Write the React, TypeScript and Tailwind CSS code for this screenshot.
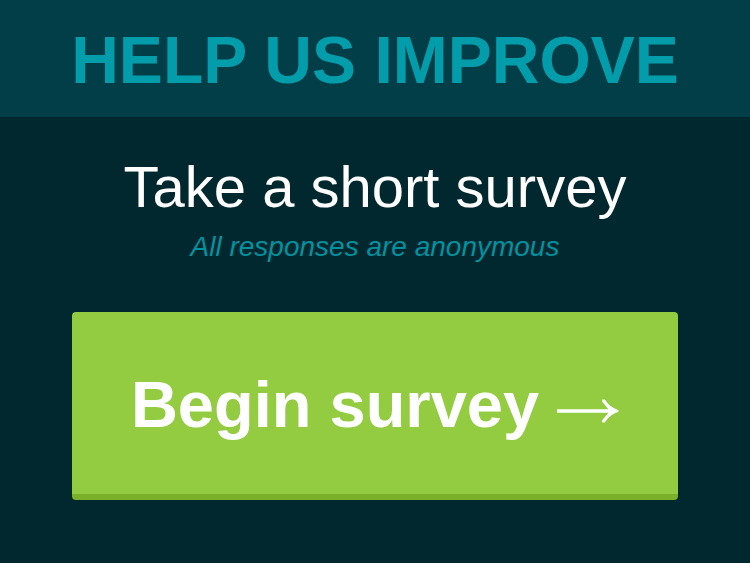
export default function App() {
  return (
    <main className="min-h-screen bg-[#01282e] font-['Liberation_Sans',Arial,sans-serif]">
      <header className="bg-[#023e48] px-4 pt-6 pb-5 text-center">
        <h1 className="text-[66px] leading-[73px] font-bold whitespace-nowrap text-[#039caa]">
          HELP US IMPROVE
        </h1>
      </header>
      <section className="px-18 pt-9 text-center">
        <h2 className="text-[58px] leading-[68px] text-white">
          Take a short survey
        </h2>
        <p className="mt-2 text-[28px] leading-[35px] text-[#0391a0] italic">
          All responses are anonymous
        </p>
        <button
          type="button"
          className="mt-12 flex w-full items-center justify-center gap-[18px] rounded-[4px] border-b-[6px] border-[#7bb02a] bg-[#93cc40] pt-[54px] pb-[51px] text-[65px] leading-[77px] font-bold text-white"
        >
          Begin survey
          <svg viewBox="0 0 62 24" className="mt-3 w-[62px]" aria-hidden="true">
            <path
              fill="currentColor"
              d="M0 10.2H51.5L45.2 2.8V.5H47.8Q52.5 8.2 61.5 11.2V12.8Q52.5 15.8 47.8 23.5H45.2V21.2L51.5 13.8H0Z"
            />
            <path fill="currentColor" d="M49 5L59 11V13L49 19L52 12Z" />
          </svg>
        </button>
      </section>
    </main>
  );
}
